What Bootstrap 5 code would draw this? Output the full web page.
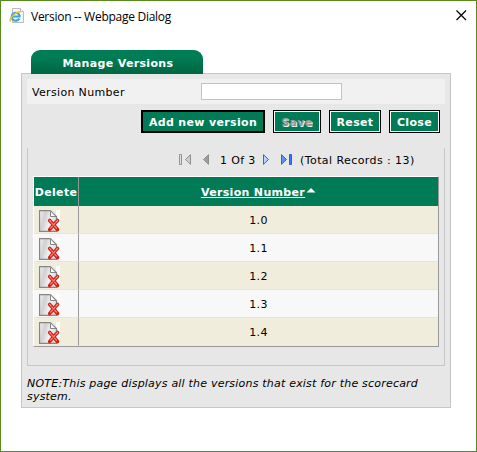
<!DOCTYPE html>
<html lang="en">
<head>
<meta charset="utf-8">
<meta name="viewport" content="width=device-width, initial-scale=1">
<title>Version -- Webpage Dialog</title>
<link href="https://cdn.jsdelivr.net/npm/bootstrap@5.3.0/dist/css/bootstrap.min.css" rel="stylesheet">
<style>
body{font:11px/13px Verdana,"DejaVu Sans",sans-serif;letter-spacing:.33px;color:#000;background:#fff}
.dialog{height:452px;border:1px solid #588a1e;overflow:hidden}
.titlebar{height:49px;padding:7px 9px 0 8px;font:12px/16px "Segoe UI","Open Sans",sans-serif}
.titlebar .caption{margin-left:6px;padding-top:1px;letter-spacing:-.27px}
.titlebar .close-x{margin-top:2px}
.tab-head{position:relative;width:172px;height:24px;margin-left:30px;border-radius:9px 9px 0 0;background:linear-gradient(#007d55 30%,#006543);color:#fff;padding:3px 0 0 2px}
.panel{width:430px;height:335px;margin:-1px 0 0 20px;border:1px solid #c6c6c6;background:#e7e7e7;padding:5px}
.field-row{height:25px;background:#f1f1f1;padding-left:5px}
.field-row label{width:169px;padding-top:2px}
.field-row input{width:141px;height:17px;border:1px solid #c3c3c3;border-radius:0;padding:0;min-height:0}
.actions{gap:8px;padding:6px 5px 0 0}
.actions .btn{height:23px;border:1px solid #000;border-radius:0;background:#007b55;color:#fff;font:bold 11px/13px Verdana,"DejaVu Sans",sans-serif;letter-spacing:.33px;padding:1px 0 0;box-shadow:inset 0 0 0 1px #fff}
.actions .btn-add{width:124px;border-width:2px;box-shadow:none}
.actions .btn-save{width:48px;color:#999;text-shadow:1px 1px 0 #eee}
.actions .btn-reset{width:52px}
.actions .btn-close-page{width:51px}
.listing{height:218px;margin-top:15px;border:1px solid #c6c6c6;border-top:0;padding:0 6px 0 5px}
.pager{height:28px;padding:0 0 4px 146px}
.pager .page-no{width:42px}
.pager .total{letter-spacing:.42px}
.versions{width:406px;height:171px;border:1px solid #999;border-top-color:#fff;border-left-color:#fff;table-layout:fixed;border-collapse:separate;border-spacing:0;margin:0}
.versions th,.versions td{padding:2px 0 0;vertical-align:middle;text-align:center}
.versions th{height:29px;background:#007b55;color:#fff;font-weight:bold}
.versions th:first-child{width:45px;border-right:1px solid #999}
.versions td{height:28px;background:#f8f8f8;border-bottom:1px solid #e4e4e4}
.versions td:first-child{border-right:1px solid #999;text-align:left;padding-left:5px}
.versions tr:nth-child(odd) td{background:#f1eddd}
.versions tbody tr:last-child td{border-bottom-color:#f1eddd}
.versions td svg{display:block}
.versions .sort{display:inline-block;vertical-align:3px;margin-left:1px}
.note{margin-top:11px;font-style:italic;letter-spacing:.205px}
</style>
</head>
<body>
<svg class="position-absolute" width="0" height="0">
<defs>
<linearGradient id="paper" x2="1" y2=".3"><stop offset="0" stop-color="#f4f4f4"/><stop offset=".35" stop-color="#d0d0d0"/><stop offset=".7" stop-color="#f2f2f2"/><stop offset="1" stop-color="#ddd"/></linearGradient>
<linearGradient id="grey"><stop offset="0" stop-color="#e6e6e6"/><stop offset="1" stop-color="#999"/></linearGradient>
<linearGradient id="blue"><stop offset="0" stop-color="#b9dcff"/><stop offset="1" stop-color="#3478f0"/></linearGradient>
<symbol id="del" viewBox="0 0 21 22">
<path fill="#fff" d="M17 0h4v22h-4z"/>
<path d="M.5.5h11l6 6v15H.5z" fill="url(#paper)"/>
<path d="M11 .5l6.500 6V9M17.500 19v2.500H.5V.5H11" fill="none" stroke="#858585" stroke-width="1.300"/>
<path d="M11.500.8v5.700h5.500z" fill="#fff" stroke="#858585"/>
<path d="M10.700 10.500Q14 14 18.500 19.500M18.500 10.500Q15 14 10.700 19.500" fill="none" stroke="#d3221a" stroke-width="3.600" stroke-linecap="round"/>
<path d="M10.700 10.500Q14 14 18.500 19.500M18.500 10.500Q15 14 10.700 19.500" fill="none" stroke="#f78a7e" stroke-width="1.200" stroke-linecap="round" stroke-dasharray="2.500 1.500"/>
</symbol>
</defs>
</svg>
<div class="dialog">
<header class="titlebar d-flex align-items-start">
<svg width="16" height="16" viewBox="0 0 16 16"><path d="M3.500.500h8l3 3v11h-11z" fill="#f7f7f7" stroke="#bbb"/><path d="M11.500.500v3h3" fill="#fff" stroke="#bbb"/><path d="M10.300 10.500A4 4 0 1 1 10.500 7.500L10.500 8.500H3.500" fill="none" stroke="#3aa5e0" stroke-width="2.200"/><path d="M1.500 13.500C-.5 11 7 3.500 11.500 3.700" fill="none" stroke="#f0bd35" stroke-width="1.400"/></svg>
<span class="caption">Version -- Webpage Dialog</span>
<svg class="close-x ms-auto" width="11" height="11" viewBox="0 0 11 11"><path d="M.5.500l9.500 9.500M10 .500L.5 10" stroke="#000" stroke-width="1.200"/></svg>
</header>
<main>
<div class="tab-head d-flex align-items-center justify-content-center fw-bold">Manage Versions</div>
<section class="panel">
<div class="field-row d-flex align-items-center"><label for="num">Version Number</label><input id="num" type="text" class="form-control"></div>
<div class="actions d-flex justify-content-end">
<button class="btn btn-add">Add new version</button><button class="btn btn-save">Save</button><button class="btn btn-reset">Reset</button><button class="btn btn-close-page">Close</button>
</div>
<div class="listing">
<div class="pager d-flex align-items-center">
<svg class="flex-shrink-0" width="41" height="12" viewBox="0 0 41 12"><g fill="url(#grey)" stroke="#888" stroke-width=".9"><path d="M.5.500h2v10h-2zM11.500.700v9.600L6.500 5.500zM29.500.700v9.600L24.500 5.500z"/></g></svg>
<span class="page-no">1 Of 3</span>
<svg class="flex-shrink-0" width="38" height="12" viewBox="0 0 38 12"><g fill="url(#blue)" stroke="#2456d6" stroke-width=".9"><path d="M1.500.700v9.600l5-4.800zM19.500.700v9.600l5-4.800zM27.500.500h2v10h-2z"/></g></svg>
<span class="total">(Total Records : 13)</span>
</div>
<table class="versions">
<thead><tr><th>Delete</th><th><span class="text-decoration-underline">Version Number</span><svg class="sort" width="10" height="5" viewBox="0 0 10 5"><path d="M.5 4.500L5 0l4.500 4.500z" fill="#fff"/></svg></th></tr></thead>
<tbody>
<tr><td><svg width="21" height="22"><use href="#del"/></svg></td><td>1.0</td></tr>
<tr><td><svg width="21" height="22"><use href="#del"/></svg></td><td>1.1</td></tr>
<tr><td><svg width="21" height="22"><use href="#del"/></svg></td><td>1.2</td></tr>
<tr><td><svg width="21" height="22"><use href="#del"/></svg></td><td>1.3</td></tr>
<tr><td><svg width="21" height="22"><use href="#del"/></svg></td><td>1.4</td></tr>
</tbody>
</table>
</div>
<div class="note">NOTE:This page displays all the versions that exist for the scorecard system.</div>
</section>
</main>
</div>
</body>
</html>
